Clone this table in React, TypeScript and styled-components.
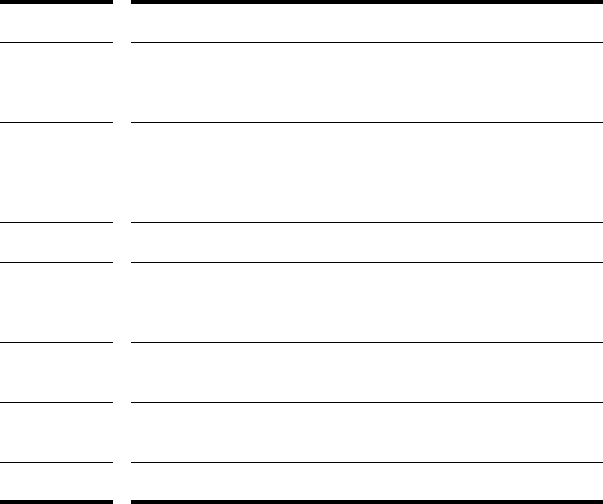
import React from "react"
import styled, { createGlobalStyle } from "styled-components"

const GlobalStyle = createGlobalStyle`
  html, body {
    margin: 0;
    padding: 0;
    background: #ffffff;
    font-family: "Liberation Sans", Arial, sans-serif;
  }
`

// row heights (content, without the 1px rule)
const rows = [38, 79, 99, 39, 79, 59, 59, 37]

const App = () => {
  return (
    <>
      <GlobalStyle />
      <Table>
        <Column>
          {rows.map((h, i) => (
            <Cell key={i} $height={h} $first={i === 0} $last={i === rows.length - 1} />
          ))}
        </Column>
        <Column>
          {rows.map((h, i) => (
            <Cell key={i} $height={h} $first={i === 0} $last={i === rows.length - 1} />
          ))}
        </Column>
      </Table>
    </>
  )
}

const Table = styled.div`
  display: grid;
  grid-template-columns: 113px 1fr;
  column-gap: 18px;
  width: 603px;
`

const Column = styled.div`
  display: flex;
  flex-direction: column;
`

const Cell = styled.div<{ $height: number; $first: boolean; $last: boolean }>`
  height: ${(p) => p.$height}px;
  border-top: ${(p) => (p.$first ? "4px solid #000" : "none")};
  border-bottom: ${(p) => (p.$last ? "4px solid #000" : "1px solid #000")};
`

export default App
